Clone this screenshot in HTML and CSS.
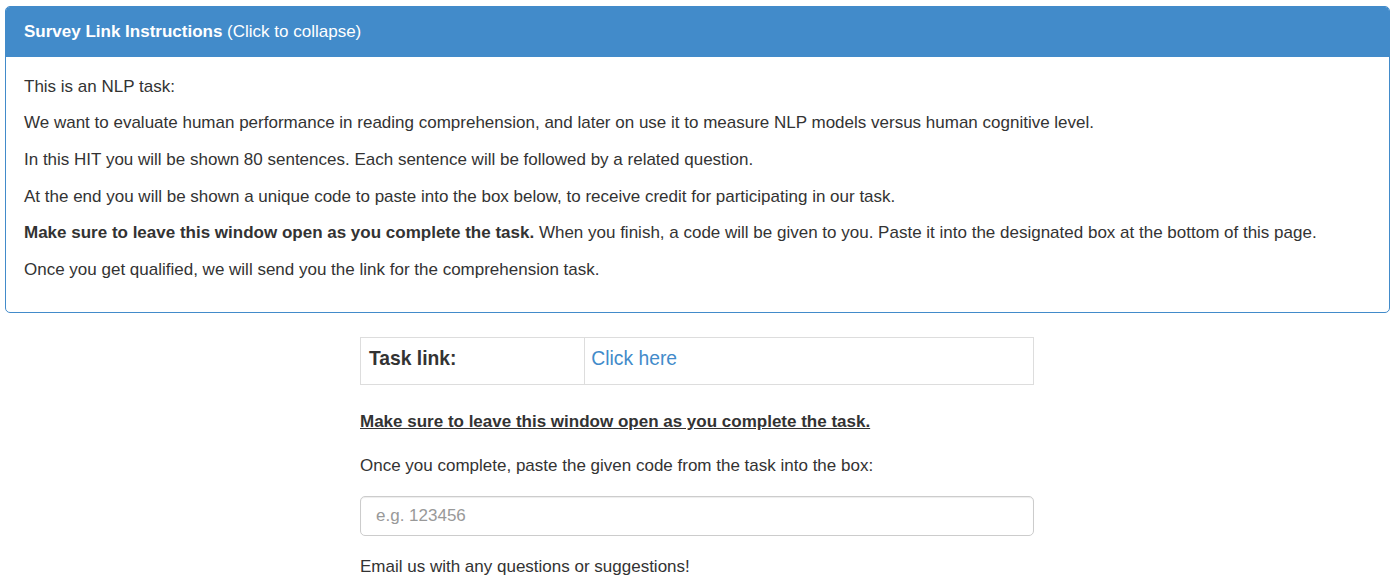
FILE: index.html
```html
<!DOCTYPE html>
<html>
<head>
<meta charset="utf-8">
<link rel="stylesheet" href="styles.css">
</head>
<body>
<div class="page">
  <section class="panel">
    <div class="panel-heading"><strong>Survey Link Instructions</strong> (Click to collapse)</div>
    <div class="panel-body">
      <p>This is an NLP task:</p>
      <p>We want to evaluate human performance in reading comprehension, and later on use it to measure NLP models versus human cognitive level.</p>
      <p>In this HIT you will be shown 80 sentences. Each sentence will be followed by a related question.</p>
      <p>At the end you will be shown a unique code to paste into the box below, to receive credit for participating in our task.</p>
      <p><strong>Make sure to leave this window open as you complete the task.</strong> When you finish, a code will be given to you. Paste it into the designated box at the bottom of this page.</p>
      <p>Once you get qualified, we will send you the link for the comprehension task.</p>
    </div>
  </section>
  <div class="task">
    <table class="link-table">
      <tr>
        <td class="label-cell">Task link:</td>
        <td class="link-cell"><a href="#">Click here</a></td>
      </tr>
    </table>
    <p class="warn"><strong><u>Make sure to leave this window open as you complete the task.</u></strong></p>
    <p class="instr">Once you complete, paste the given code from the task into the box:</p>
    <input class="code-input" type="text" placeholder="e.g. 123456">
    <p class="email">Email us with any questions or suggestions!</p>
  </div>
</div>
</body>
</html>
```
FILE: styles.css
```css
html, body {
  margin: 0;
  padding: 0;
  background: #fff;
}
body {
  font-family: "Liberation Sans", Arial, sans-serif;
  font-size: 17px;
  line-height: 24.4px;
  color: #333;
}
.page {
  padding: 6px 5px 0 5px;
}
.panel {
  border: 1px solid #428bca;
  border-radius: 5px;
  margin-bottom: 24px;
  overflow: hidden;
}
.panel-heading {
  background: #428bca;
  color: #fff;
  padding: 12.8px 18px 12.3px;
  font-size: 17px;
  line-height: 24.4px;
}
.panel-body {
  padding: 18.3px 18px 17.6px;
}
.panel-body p {
  margin: 0 0 12.2px 0;
}
.task {
  width: 674px;
  margin: 0 auto;
  padding-right: 1px;
}
.link-table {
  width: 100%;
  border-collapse: collapse;
  margin-bottom: 24.7px;
}
.link-table td {
  border: 1px solid #ddd;
  padding: 7px 8px 11px;
  line-height: 28px;
  font-size: 19.3px;
}
.label-cell {
  width: 33.333%;
  font-weight: bold;
}
.link-cell {
  padding-left: 6px !important;
}
.link-cell a {
  color: #428bca;
  text-decoration: none;
}
.task p {
  margin: 0;
}
.warn {
  margin-bottom: 19.6px !important;
}
.instr {
  margin-bottom: 18.4px !important;
}
.code-input {
  display: block;
  box-sizing: border-box;
  width: 100%;
  height: 40px;
  padding: 6px 15px;
  font-family: "Liberation Sans", Arial, sans-serif;
  font-size: 17px;
  color: #555;
  border: 1px solid #ccc;
  border-radius: 5px;
  box-shadow: inset 0 1px 1px rgba(0,0,0,0.075);
  margin-bottom: 18.2px;
}
.code-input::placeholder {
  color: #999;
}
```
